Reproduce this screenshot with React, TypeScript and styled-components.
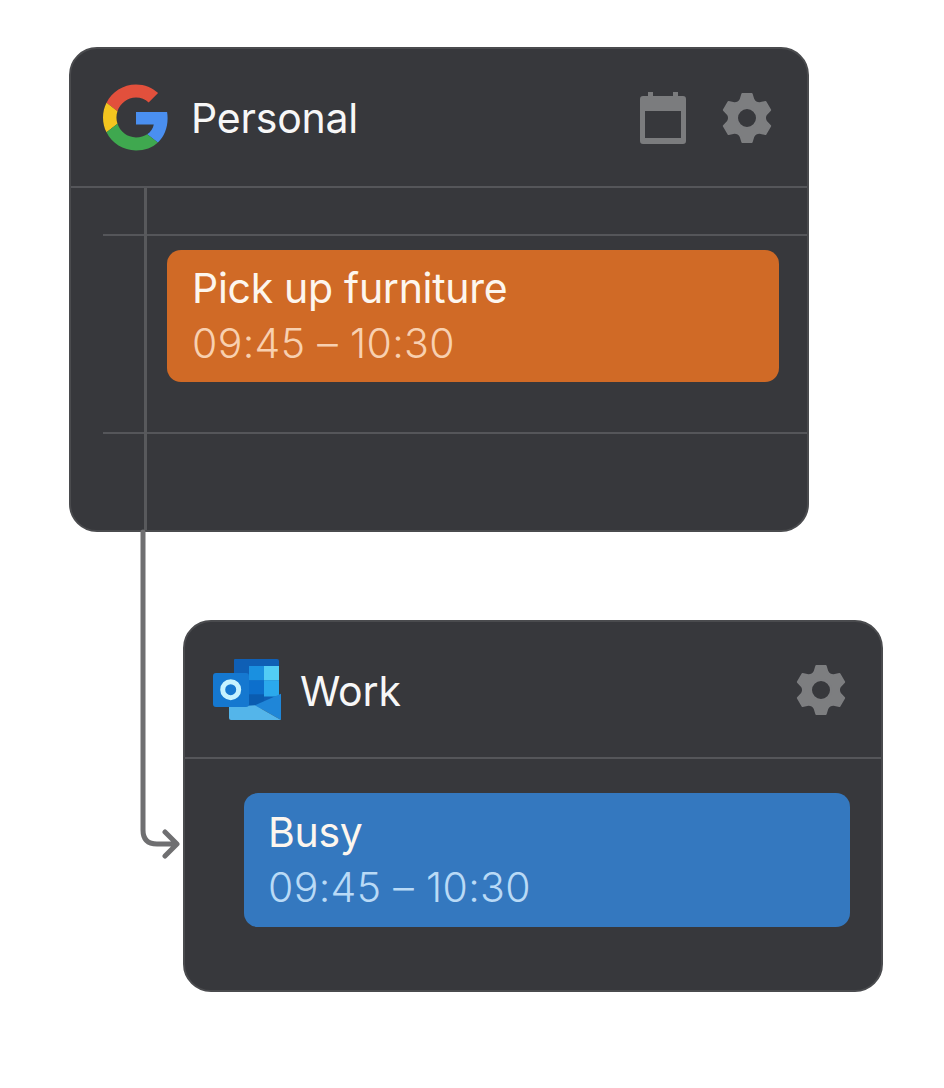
import React from "react";
import styled, { createGlobalStyle } from "styled-components";

const Global = createGlobalStyle`
  html, body { margin: 0; padding: 0; background: #ffffff; }
  body { font-family: "Inter", "Liberation Sans", sans-serif; }
`;

const Page = styled.main`
  position: relative;
  width: 944px;
  height: 1088px;
  box-sizing: border-box;
  padding: 47px 0 0 69px;
  display: flex;
  flex-direction: column;
  gap: 88px;
  overflow: hidden;
  background: #ffffff;
`;

const Card = styled.section<{ $width: number; $height: number; $indent: number }>`
  position: relative;
  box-sizing: border-box;
  width: ${(p) => p.$width}px;
  height: ${(p) => p.$height}px;
  margin-left: ${(p) => p.$indent}px;
  background: #37383c;
  border: 2px solid #4a4b4e;
  border-radius: 28px;
  overflow: hidden;
`;

const Header = styled.header<{ $height: number; $left: number; $right: number; $gap: number }>`
  box-sizing: border-box;
  height: ${(p) => p.$height}px;
  padding: 0 ${(p) => p.$right}px 0 ${(p) => p.$left}px;
  display: flex;
  align-items: center;
  gap: ${(p) => p.$gap}px;
`;

const Title = styled.h2<{ $drop?: number }>`
  flex: 1;
  margin: ${(p) => p.$drop ?? 0}px 0 0;
  font-size: 41px;
  font-weight: 400;
  letter-spacing: -0.2px;
  color: #f7f7f7;
`;

const Actions = styled.div`
  display: flex;
  align-items: center;
  gap: 35px;
`;

const Rule = styled.div<{ $inset?: number }>`
  height: 2px;
  margin-left: ${(p) => p.$inset ?? 0}px;
  background: #55565a;
`;

const Spine = styled.div`
  position: absolute;
  left: 73px;
  top: 139px;
  bottom: 0;
  width: 3px;
  background: #58595c;
`;

const Gap = styled.div<{ $height: number }>`
  height: ${(p) => p.$height}px;
`;

const Event = styled.article<{ $tone: string; $height: number; $left: number; $right: number; $top: number; $pad: number }>`
  position: relative;
  box-sizing: border-box;
  height: ${(p) => p.$height}px;
  margin: ${(p) => p.$top}px ${(p) => p.$right}px 0 ${(p) => p.$left}px;
  padding: 0 0 2px ${(p) => p.$pad}px;
  display: flex;
  flex-direction: column;
  justify-content: center;
  gap: 5px;
  border-radius: 14px;
  background: ${(p) => p.$tone};
`;

const EventTitle = styled.div`
  font-size: 41px;
  line-height: 50px;
  letter-spacing: -0.3px;
  color: #fdf6ee;
`;

const EventTime = styled.div<{ $tone: string }>`
  font-size: 41px;
  font-weight: 350;
  line-height: 50px;
  letter-spacing: 0.35px;
  color: ${(p) => p.$tone};
`;

const Connector = styled.svg`
  position: absolute;
  left: 130px;
  top: 525px;
`;

const gearPath = (() => {
  const pt = (r: number, deg: number) => {
    const a = (deg * Math.PI) / 180;
    return `${(26 + r * Math.cos(a)).toFixed(2)} ${(26 + r * Math.sin(a)).toFixed(2)}`;
  };
  let d = "";
  for (let i = 0; i < 6; i++) {
    const a = -90 + i * 60;
    d += `${i === 0 ? "M" : "L"}${pt(19.5, a - 19)} L${pt(24.5, a - 11)} L${pt(24.5, a + 11)} L${pt(19.5, a + 19)} Q${pt(16.8, a + 30)} ${pt(19.5, a + 41)} `;
  }
  return d + "Z";
})();

const Gear = () => (
  <svg width="52" height="52" viewBox="0 0 52 52" aria-hidden="true">
    <path
      d={`${gearPath} M26 16a10 10 0 1 0 0 20a10 10 0 1 0 0-20Z`}
      fill="#7d7e80"
      fillRule="evenodd"
      stroke="#7d7e80"
      strokeWidth="2"
      strokeLinejoin="round"
    />
  </svg>
);

const CalendarIcon = () => (
  <svg width="46" height="52" viewBox="0 0 46 52" aria-hidden="true">
    <path
      fillRule="evenodd"
      fill="#7b7c7e"
      d="M8 0h5v4h20V0h5v4h5a3 3 0 0 1 3 3v42a3 3 0 0 1-3 3H3a3 3 0 0 1-3-3V7a3 3 0 0 1 3-3h5ZM5 19v27h36V19Z"
    />
  </svg>
);

const GoogleLogo = () => (
  <svg width="66" height="67" viewBox="0 0 48 48" aria-hidden="true">
    <path fill="#E2503C" d="M24 9.5c3.54 0 6.71 1.22 9.21 3.6l6.85-6.85C35.9 2.38 30.47 0 24 0 14.62 0 6.51 5.38 2.56 13.22l7.98 6.19C12.43 13.72 17.74 9.5 24 9.5z" />
    <path fill="#4A8FF0" d="M46.98 24.55c0-1.57-.15-3.09-.38-4.55H24v9.02h12.94c-.58 2.96-2.26 5.48-4.78 7.18l7.73 6c4.51-4.18 7.09-10.36 7.09-17.65z" />
    <path fill="#F4C51F" d="M10.53 28.59c-.48-1.45-.76-2.99-.76-4.59s.27-3.14.76-4.59l-7.98-6.19C.92 16.46 0 20.12 0 24c0 3.88.92 7.54 2.56 10.78l7.97-6.19z" />
    <path fill="#3FA84F" d="M24 48c6.48 0 11.93-2.13 15.89-5.81l-7.73-6c-2.15 1.45-4.92 2.3-8.16 2.3-6.26 0-11.57-4.22-13.47-9.91l-7.98 6.19C6.51 42.62 14.62 48 24 48z" />
  </svg>
);

const OutlookLogo = () => (
  <svg width="68" height="61" viewBox="0 0 68 61" aria-hidden="true">
    <path fill="#0f5fb5" d="M22 0h42a2 2 0 0 1 2 2v48H21V1a1 1 0 0 1 1-1Z" />
    <rect x="36" y="7" width="15" height="14.5" fill="#1a90e0" />
    <rect x="51" y="7" width="15" height="14.5" fill="#52cdf5" />
    <rect x="21" y="21.5" width="15" height="14" fill="#0a62b6" />
    <rect x="36" y="21.5" width="15" height="14" fill="#0c6fcc" />
    <rect x="51" y="21.5" width="15" height="16" fill="#2ba9ec" />
    <rect x="36" y="35.5" width="15" height="12" fill="#0a5cb0" />
    <path fill="#1f86d8" d="M68 34.7V61L42 46.3Z" />
    <path fill="#54b5ea" d="M16 48l26-1.7L68 61H18a2 2 0 0 1-2-2Z" />
    <rect x="0" y="14" width="36" height="34" rx="3" fill="#1578d0" />
    <circle cx="17.7" cy="30.7" r="8" fill="none" stroke="#c6f3ff" strokeWidth="5" />
  </svg>
);

export default function App() {
  return (
    <Page>
      <Global />
      <Card $width={740} $height={485} $indent={0}>
        <Header $height={137} $left={32} $right={34} $gap={22}>
          <GoogleLogo />
          <Title>Personal</Title>
          <Actions>
            <CalendarIcon />
            <Gear />
          </Actions>
        </Header>
        <Rule />
        <Spine />
        <Gap $height={46} />
        <Rule $inset={32} />
        <Event $tone="#d06a26" $height={132} $top={14} $left={96} $right={28} $pad={25}>
          <EventTitle>Pick up furniture</EventTitle>
          <EventTime $tone="#f8d0b0">09:45 – 10:30</EventTime>
        </Event>
        <Gap $height={50} />
        <Rule $inset={32} />
      </Card>
      <Card $width={700} $height={372} $indent={114}>
        <Header $height={135} $left={28} $right={34} $gap={19}>
          <OutlookLogo />
          <Title $drop={2}>Work</Title>
          <Gear />
        </Header>
        <Rule />
        <Event $tone="#3478bf" $height={134} $top={34} $left={59} $right={31} $pad={24}>
          <EventTitle>Busy</EventTitle>
          <EventTime $tone="#b9daf6">09:45 – 10:30</EventTime>
        </Event>
      </Card>
      <Connector width="60" height="345" viewBox="0 0 60 345" aria-hidden="true">
        <path
          d="M13 7V305c0 10 5 14 14 14H46M35 307l12 12-12 12"
          fill="none"
          stroke="#6f6f71"
          strokeWidth="5"
          strokeLinecap="round"
          strokeLinejoin="round"
        />
      </Connector>
    </Page>
  );
}
